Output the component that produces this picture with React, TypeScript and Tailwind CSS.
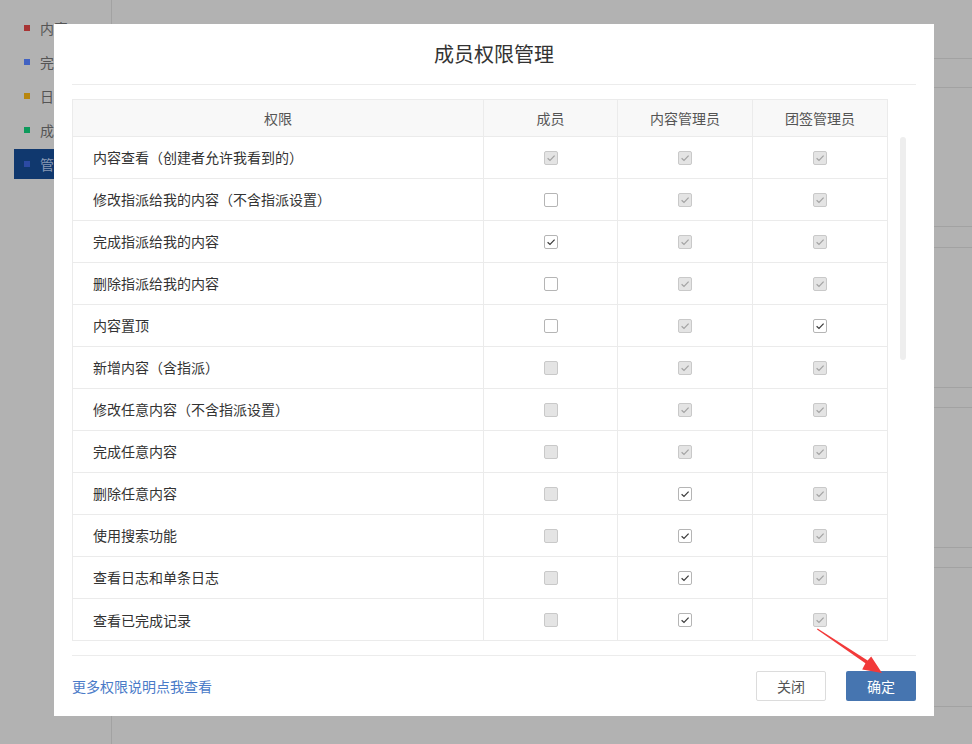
import React from "react";

type S = "dc" | "c" | "u" | "du";

const rows: [string, S, S, S][] = [
  ["内容查看（创建者允许我看到的）", "dc", "dc", "dc"],
  ["修改指派给我的内容（不含指派设置）", "u", "dc", "dc"],
  ["完成指派给我的内容", "c", "dc", "dc"],
  ["删除指派给我的内容", "u", "dc", "dc"],
  ["内容置顶", "u", "dc", "c"],
  ["新增内容（含指派）", "du", "dc", "dc"],
  ["修改任意内容（不含指派设置）", "du", "dc", "dc"],
  ["完成任意内容", "du", "dc", "dc"],
  ["删除任意内容", "du", "c", "dc"],
  ["使用搜索功能", "du", "c", "dc"],
  ["查看日志和单条日志", "du", "c", "dc"],
  ["查看已完成记录", "du", "c", "dc"],
];

function Box({ s }: { s: S }) {
  const disabled = s === "dc" || s === "du";
  const checked = s === "dc" || s === "c";
  return (
    <span
      className={
        "flex h-[14px] w-[14px] items-center justify-center rounded-[2px] border " +
        (disabled ? "border-[#c9c9c9] bg-[#e4e4e4]" : "border-[#b5b5b5] bg-white")
      }
    >
      {checked && (
        <svg width="10" height="10" viewBox="0 0 10 10">
          <path
            d="M1.6 5.2 L4 7.4 L8.6 2.6"
            fill="none"
            stroke={disabled ? "#a3a3a3" : "#3a3a3a"}
            strokeWidth="1.2"
          />
        </svg>
      )}
    </span>
  );
}

const sideItems = [
  { t: "内容", c: "bg-[#a83434]" },
  { t: "完成", c: "bg-[#4162c2]" },
  { t: "日志", c: "bg-[#b8860e]" },
  { t: "成员", c: "bg-[#0d9a5c]" },
  { t: "管理", c: "bg-[#2c4aa3]", sel: true },
];

export default function App() {
  const font = { fontFamily: '"Noto Sans CJK SC", "Noto Sans", sans-serif' };
  return (
    <div className="relative h-[744px] w-[972px] overflow-hidden bg-[#b2b2b2]" style={font}>
      {/* background page */}
      <div className="flex h-full">
        <div className="flex w-[112px] flex-col border-r border-[#a2a2a2] pt-[13px]">
          {sideItems.map((it) => (
            <div
              key={it.t}
              className={
                "ml-[14px] mb-[4px] flex h-[30px] items-center pl-[10px] text-[14px] " +
                (it.sel ? "bg-[#10386e] text-[#8a9ab5]" : "text-[#555]")
              }
            >
              <span className={"mr-[10px] h-[6px] w-[6px] " + it.c} />
              {it.t}
            </div>
          ))}
        </div>
        <div className="flex flex-1 flex-col">
          {[59, 29, 139, 21, 140, 20, 140, 20, 139].map((h, i) => (
            <div key={i} className="border-b border-[#a2a2a2]" style={{ height: h }} />
          ))}
        </div>
      </div>

      {/* modal */}
      <div className="absolute left-[54px] top-[24px] flex h-[692px] w-[880px] flex-col bg-white">
        <div className="flex h-[60px] items-center justify-center text-[20px] text-[#333]">
          成员权限管理
        </div>
        <div className="mx-[18px] h-px bg-[#ececec]" />
        <div className="mx-[18px] mt-[14px] flex">
          <div className="h-[542px] w-[816px] overflow-hidden border border-[#ebebeb]">
            <div className="grid grid-cols-[411px_134px_135px_134px]">
              {["权限", "成员", "内容管理员", "团签管理员"].map((h, i) => (
                <div
                  key={h}
                  className={
                    "flex h-[37px] items-center justify-center border-b border-[#ebebeb] bg-[#f8f8f8] text-[14px] text-[#555] " +
                    (i < 3 ? "border-r" : "")
                  }
                >
                  {h}
                </div>
              ))}
              {rows.map((r, ri) => (
                <React.Fragment key={r[0]}>
                  <div
                    className={
                      "flex h-[42px] items-center border-r border-[#ebebeb] pl-[20px] text-[14px] text-[#333] " +
                      (ri < rows.length - 1 ? "border-b" : "")
                    }
                  >
                    {r[0]}
                  </div>
                  {[r[1], r[2], r[3]].map((s, j) => (
                    <div
                      key={j}
                      className={
                        "flex h-[42px] items-center justify-center border-[#ebebeb] " +
                        (j < 2 ? "border-r " : "") +
                        (ri < rows.length - 1 ? "border-b" : "")
                      }
                    >
                      <Box s={s} />
                    </div>
                  ))}
                </React.Fragment>
              ))}
            </div>
          </div>
          <div className="ml-[12px] mt-[38px] h-[223px] w-[6px] rounded-full bg-[#eeeeee]" />
        </div>
        <div className="mx-[18px] mt-[14px] h-px bg-[#ececec]" />
        <div className="mx-[18px] mt-[15px] flex h-[30px] items-center">
          <span className="text-[14px] text-[#4a7bc8]">更多权限说明点我查看</span>
          <div className="ml-auto flex gap-[20px]">
            <button className="h-[30px] w-[70px] rounded-[2px] border border-[#dcdcdc] bg-white text-[14px] text-[#555]">
              关闭
            </button>
            <button className="h-[30px] w-[70px] rounded-[2px] bg-[#4675b0] text-[14px] text-white">
              确定
            </button>
          </div>
        </div>
      </div>

      {/* red arrow annotation */}
      <svg className="pointer-events-none absolute left-0 top-0" width="972" height="744">
        <polygon
          points="817,629.5 865.4,663.2 862.2,669.6 882,673 871.2,656.4 867.6,660.6 817.6,628.4"
          fill="#f23a3a"
        />
      </svg>
    </div>
  );
}
